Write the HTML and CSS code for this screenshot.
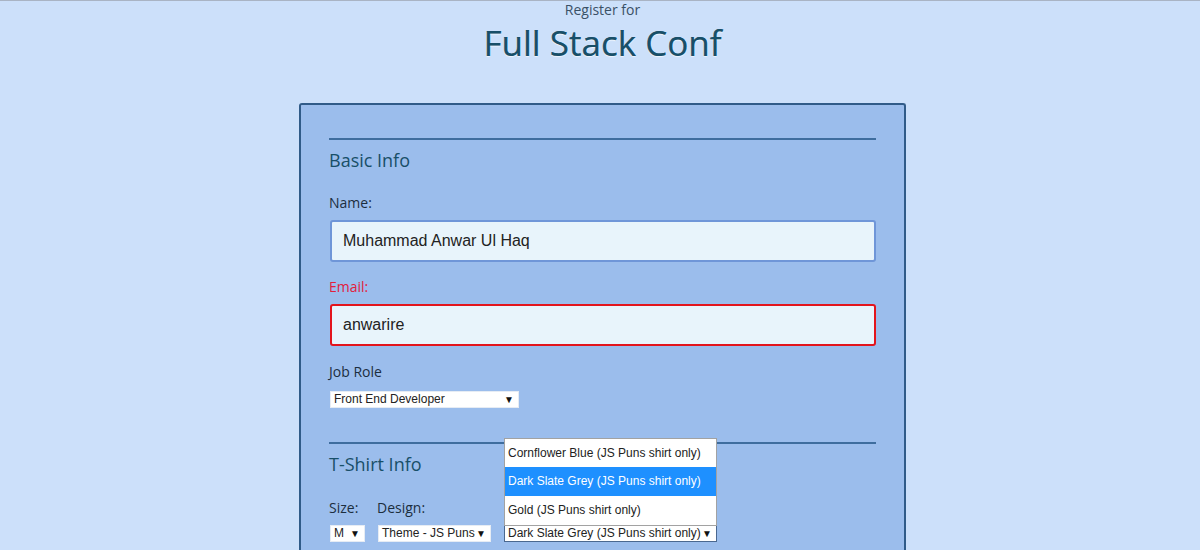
FILE: index.html
```html
<!DOCTYPE html>
<html>
<head>
<meta charset="utf-8">
<link rel="stylesheet" href="styles.css">
</head>
<body>
<header class="header">
  <div class="kicker">Register for</div>
  <h1 class="title">Full Stack Conf</h1>
</header>
<form class="card">
  <section class="section">
    <h2 class="section-title">Basic Info</h2>
    <label class="label">Name:</label>
    <div class="input">Muhammad Anwar Ul Haq</div>
    <label class="label label-error">Email:</label>
    <div class="input input-error">anwarire</div>
    <label class="label label-job">Job Role</label>
    <div class="select select-job"><span>Front End Developer</span><span class="arrow">▼</span></div>
  </section>
  <section class="section section-shirt">
    <h2 class="section-title">T-Shirt Info</h2>
    <div class="shirt-row">
      <div class="field">
        <label class="label label-shirt">Size:</label>
        <div class="select select-size"><span>M</span><span class="arrow">▼</span></div>
      </div>
      <div class="field">
        <label class="label label-shirt">Design:</label>
        <div class="select select-design"><span>Theme - JS Puns</span><span class="arrow">▼</span></div>
      </div>
      <div class="field field-color">
        <div class="select select-color"><span>Dark Slate Grey (JS Puns shirt only)</span><span class="arrow">▼</span>
          <ul class="dropdown">
            <li class="option">Cornflower Blue (JS Puns shirt only)</li>
            <li class="option option-active">Dark Slate Grey (JS Puns shirt only)</li>
            <li class="option">Gold (JS Puns shirt only)</li>
          </ul>
        </div>
      </div>
    </div>
  </section>
</form>
</body>
</html>
```
FILE: styles.css
```css
html, body {
  margin: 0;
  padding: 0;
}
body {
  background: #cce0fa;
  border-top: 1px solid #a9b4c4;
  font-family: "Open Sans", "Noto Sans", sans-serif;
  color: #184f68;
  padding-left: 5px;
  height: 549px;
  overflow: hidden;
}
.header {
  text-align: center;
}
.kicker {
  font-size: 14px;
  line-height: 18px;
  color: #3a5166;
}
.title {
  margin: 0;
  font-size: 35px;
  font-weight: 500;
  line-height: 48px;
  color: #184f68;
  text-shadow: 0 1px 1px rgba(255,255,255,0.7), 0 0 0.5px #184f68;
}
.card {
  width: 547px;
  margin: 36px auto 0;
  border: 2px solid #305b88;
  border-bottom: none;
  border-radius: 3px 3px 0 0;
  background: #9bbdec;
  padding: 33px 28px 20px;
}
.section {
  border-top: 2px solid #3e6d9e;
  display: flex;
  flex-direction: column;
  align-items: flex-start;
}
.section-shirt {
  margin-top: 34px;
}
.section-title {
  margin: 9px 0 0;
  font-size: 18px;
  font-weight: 500;
  line-height: 22px;
  color: #184f68;
}
.label {
  font-size: 14px;
  line-height: 18px;
  color: #1c2e3e;
  margin-top: 23px;
  margin-bottom: 8px;
}
.label-error {
  color: #e2203c;
  margin-top: 16px;
}
.label-job {
  margin-top: 17px;
  margin-bottom: 10px;
}
.label-shirt {
  margin-top: 24px;
  margin-bottom: 8px;
}
.input {
  box-sizing: border-box;
  width: 546px;
  margin-left: 1px;
  height: 42px;
  border: 2px solid #6f96d8;
  border-radius: 3px;
  background: #e8f4fb;
  font-family: "Liberation Sans", Arial, sans-serif;
  font-size: 16px;
  line-height: 38px;
  padding: 0 11px;
  color: #222;
}
.input-error {
  border-color: #e3141c;
}
.select {
  position: relative;
  box-sizing: border-box;
  height: 17px;
  background: #fff;
  border: 1px solid #e6ecf4;
  font-family: "Liberation Sans", Arial, sans-serif;
  font-size: 12px;
  line-height: 15px;
  color: #222;
  display: flex;
  justify-content: space-between;
  align-items: center;
  padding: 0 4px 0 3px;
  margin-left: 1px;
}
.arrow {
  font-size: 10px;
  line-height: 15px;
  color: #111;
}
.select-job {
  width: 189px;
}
.shirt-row {
  display: flex;
  align-items: flex-end;
  gap: 12px;
}
.field {
  display: flex;
  flex-direction: column;
  align-items: flex-start;
}
.select-size {
  width: 35px;
}
.select-design {
  width: 113px;
}
.field-color {
  margin-left: 0;
}
.select-color {
  width: 213px;
  border-color: #4a6890;
}
.dropdown {
  position: absolute;
  left: -1px;
  bottom: 100%;
  width: 213px;
  box-sizing: border-box;
  margin: 0 0 0;
  padding: 0;
  list-style: none;
  background: #fff;
  border: 1px solid #a2a2a2;
}
.option {
  height: 28px;
  line-height: 28px;
  padding: 0 3px;
  font-size: 12px;
  color: #222;
}
.option + .option {
  height: 29px;
}
.option-active {
  background: #1e90ff;
  color: #fff;
}
```
